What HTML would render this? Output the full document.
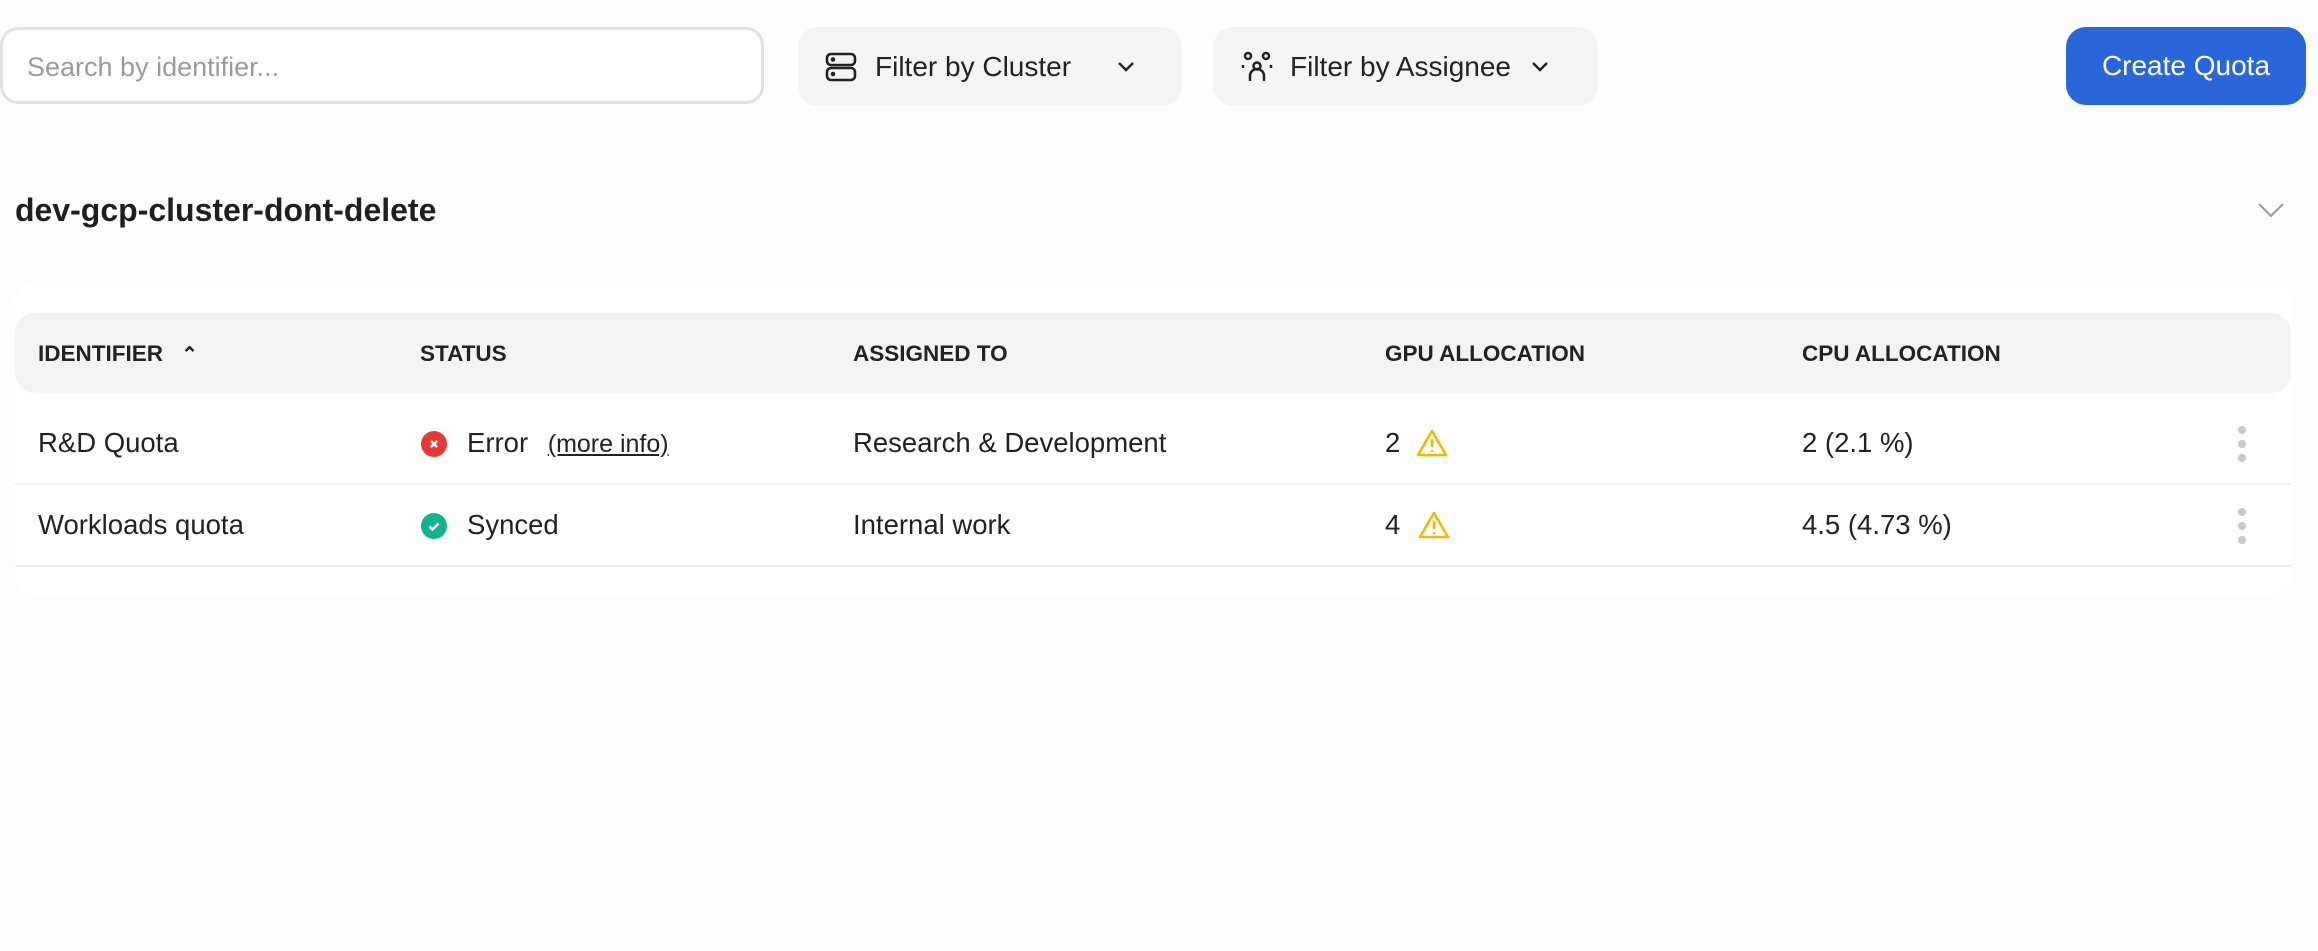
<!DOCTYPE html>
<html><head><style>
*{box-sizing:border-box;margin:0;padding:0}
body{width:2318px;height:951px;background:#fdfdfd;font-family:"Liberation Sans",sans-serif;color:#1f1f1f;position:relative;overflow:hidden}
.abs{position:absolute}
.search{left:0;top:27px;width:764px;height:77px;border:3px solid #e2e2e4;border-radius:18px;background:#fff;font-size:27px;color:#9a9aa2;padding:22px 24px}
.btn{top:27px;height:79px;background:#f4f4f4;border-radius:20px;font-size:28px;display:flex;align-items:center;color:#222}
.create{position:absolute;left:2066px;top:27px;width:240px;height:78px;background:#2866d9;border-radius:20px;color:#fff;font-size:28px;display:flex;align-items:center;justify-content:center}
h2{position:absolute;left:15px;top:192px;font-size:32px;font-weight:bold;color:#1f1f1f}
.card{left:15px;top:281px;width:2276px;height:315px;background:#fff;border-radius:22px}
.head{left:15px;top:313px;width:2276px;height:80px;background:#f3f3f3;border-radius:20px}
.th{font-size:22.5px;font-weight:bold;top:341px;color:#222}
.td{font-size:27.5px;color:#222}
.line{left:15px;width:2276px;height:2px;background:#f0f0f0}
.dots{width:8px}
.dots i{display:block;width:8px;height:8px;border-radius:50%;background:#c8c8c8;margin-bottom:6px}
</style></head><body>
<div class="abs search">Search by identifier...</div>
<div class="abs btn" style="left:798px;width:384px">
 <svg style="margin-left:27px" width="32" height="30" viewBox="0 0 32 30" fill="none" stroke="#222" stroke-width="2.6"><rect x="2" y="2" width="28" height="11" rx="4"/><rect x="2" y="16" width="28" height="12" rx="4"/><circle cx="8" cy="7.5" r="1" fill="#222"/><circle cx="8" cy="22" r="1" fill="#222"/></svg>
 <span style="margin-left:18px">Filter by Cluster</span>
 <svg style="margin-left:46px" width="18" height="12" viewBox="0 0 18 12" fill="none" stroke="#222" stroke-width="2.4"><path d="M2 2l7 7 7-7"/></svg>
</div>
<div class="abs btn" style="left:1213px;width:385px">
 <svg style="margin-left:27px" width="34" height="32" viewBox="0 0 34 32" fill="none" stroke="#222" stroke-width="2.5"><circle cx="8" cy="5" r="3"/><circle cx="26" cy="5" r="3"/><circle cx="17" cy="15" r="3.5"/><path d="M3 17v-3M31 17v-3M10 30v-5a7 7 0 0 1 14 0v5"/></svg>
 <span style="margin-left:16px">Filter by Assignee</span>
 <svg style="margin-left:20px" width="18" height="12" viewBox="0 0 18 12" fill="none" stroke="#222" stroke-width="2.4"><path d="M2 2l7 7 7-7"/></svg>
</div>
<div class="create">Create Quota</div>
<h2>dev-gcp-cluster-dont-delete</h2>
<svg class="abs" style="left:2257px;top:202px" width="28" height="16" viewBox="0 0 28 16" fill="none" stroke="#9a9aa0" stroke-width="2"><path d="M2 2l12 12 12-12"/></svg>
<div class="abs card"></div>
<div class="abs head"></div>
<div class="abs th" style="left:38px">IDENTIFIER <span style="margin-left:12px;font-size:20px">&#8963;</span></div>
<div class="abs th" style="left:420px">STATUS</div>
<div class="abs th" style="left:853px">ASSIGNED TO</div>
<div class="abs th" style="left:1385px">GPU ALLOCATION</div>
<div class="abs th" style="left:1802px">CPU ALLOCATION</div>

<div class="abs td" style="left:38px;top:427px">R&amp;D Quota</div>
<svg class="abs" style="left:421px;top:431px" width="26" height="26" viewBox="0 0 26 26"><circle cx="13" cy="13" r="13" fill="#e53935"/><path d="M10 10l6 6M16 10l-6 6" stroke="#fff" stroke-width="2.4"/></svg>
<div class="abs td" style="left:467px;top:427px">Error <span style="margin-left:12px;font-size:25px;text-decoration:underline">(more info)</span></div>
<div class="abs td" style="left:853px;top:427px">Research &amp; Development</div>
<div class="abs td" style="left:1385px;top:427px">2</div>
<svg class="abs" style="left:1416px;top:428px" width="32" height="30" viewBox="0 0 32 30" fill="none" stroke="#f5b800" stroke-width="2.6"><path d="M16 3L2 27h28z" stroke-linejoin="round"/><path d="M16 11v8M16 22v2"/></svg>
<div class="abs td" style="left:1802px;top:427px">2 (2.1 %)</div>
<div class="abs dots" style="left:2238px;top:426px"><i></i><i></i><i></i></div>
<div class="abs line" style="top:483px"></div>

<div class="abs td" style="left:38px;top:509px">Workloads quota</div>
<svg class="abs" style="left:421px;top:513px" width="26" height="26" viewBox="0 0 26 26"><circle cx="13" cy="13" r="13" fill="#14b38f"/><path d="M8.5 13.5l3 3 6-6" stroke="#fff" stroke-width="2.4" fill="none"/></svg>
<div class="abs td" style="left:467px;top:509px">Synced</div>
<div class="abs td" style="left:853px;top:509px">Internal work</div>
<div class="abs td" style="left:1385px;top:509px">4</div>
<svg class="abs" style="left:1418px;top:510px" width="32" height="30" viewBox="0 0 32 30" fill="none" stroke="#f5b800" stroke-width="2.6"><path d="M16 3L2 27h28z" stroke-linejoin="round"/><path d="M16 11v8M16 22v2"/></svg>
<div class="abs td" style="left:1802px;top:509px">4.5 (4.73 %)</div>
<div class="abs dots" style="left:2238px;top:508px"><i></i><i></i><i></i></div>
<div class="abs line" style="top:565px"></div>
</body></html>
